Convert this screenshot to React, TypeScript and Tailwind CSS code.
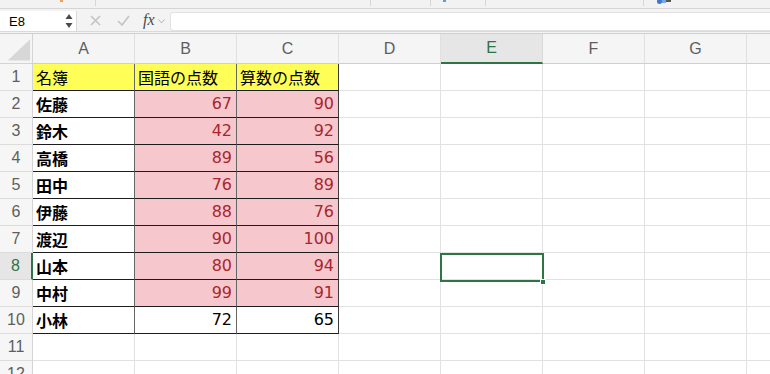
import React from "react";

const cols = ["A", "B", "C", "D", "E", "F", "G", "H"];
const data: [string, number, number][] = [
  ["佐藤", 67, 90],
  ["鈴木", 42, 92],
  ["高橋", 89, 56],
  ["田中", 76, 89],
  ["伊藤", 88, 76],
  ["渡辺", 90, 100],
  ["山本", 80, 94],
  ["中村", 99, 91],
  ["小林", 72, 65],
];

const hdrFont = { fontFamily: '"Liberation Sans", Arial, sans-serif' };
const jpFont = { fontFamily: '"Noto Sans CJK JP", sans-serif' };
const numFont = { fontFamily: '"DejaVu Sans", sans-serif' };

function Cell({ r, c }: { r: number; c: number }) {
  const inTable = r <= 10 && c <= 2;
  let cls = "w-[102px] shrink-0 h-full flex items-center border-b border-r overflow-hidden whitespace-nowrap text-[16px] ";
  if (inTable) {
    cls += "border-b-[#1c1c1c] ";
    cls += c === 2 ? "border-r-[#3a3a3a] " : "border-r-[#666666] ";
  } else {
    cls += "border-b-[#e2e2e2] border-r-[#e2e2e2] ";
  }
  let bg = "bg-white ";
  if (r === 1 && c <= 2) bg = "bg-[#fffe57] ";
  else if (r >= 2 && r <= 9 && (c === 1 || c === 2)) bg = "bg-[#f6c8cd] ";
  cls += bg;

  let content: React.ReactNode = null;
  if (r === 1 && c <= 2) {
    const t = ["名簿", "国語の点数", "算数の点数"][c];
    content = (
      <span className="pl-[3px] text-black" style={jpFont}>
        {t}
      </span>
    );
  } else if (r >= 2 && r <= 10 && c <= 2) {
    const row = data[r - 2];
    if (c === 0) {
      content = (
        <span className="pl-[3px] text-black font-bold" style={jpFont}>
          {row[0]}
        </span>
      );
    } else {
      cls += "justify-end ";
      const red = r <= 9;
      content = (
        <span
          className={red ? "pr-[4px] text-[#a8262c]" : "pr-[4px] text-black"}
          style={numFont}
        >
          {row[c]}
        </span>
      );
    }
  }
  return <div className={cls}>{content}</div>;
}

export default function App() {
  const rows = Array.from({ length: 12 }, (_, i) => i + 1);
  return (
    <div className="w-[770px] h-[374px] overflow-hidden bg-white flex flex-col">
      {/* toolbar remnant */}
      <div className="h-[9px] shrink-0 bg-[#f2f2f2] border-b border-[#d5d5d5] flex items-start">
        <div className="ml-[60px] w-[3px] h-[2px] bg-[#f0a25c]" />
        <div className="ml-[32px] w-[1px] h-[6px] bg-[#d6d6d6]" />
        <div className="ml-[274px] w-[1px] h-[6px] bg-[#d6d6d6]" />
        <div className="ml-[59px] w-[1px] h-[6px] bg-[#d6d6d6]" />
        <div className="ml-[12px] w-[3px] h-[2px] bg-[#5b9be2]" />
        <div className="ml-[39px] w-[1px] h-[6px] bg-[#d6d6d6]" />
        <div className="ml-[157px] w-[1px] h-[6px] bg-[#d6d6d6]" />
        <div className="ml-[13px] w-[14px] h-[5px] flex">
          <div className="w-[5px] h-[4px] bg-[#3f79d0] rounded-b-sm" />
          <div className="w-[4px] h-[3px] bg-[#7aa5e6]" />
          <div className="w-[5px] h-[2px] bg-[#555]" />
        </div>
      </div>

      {/* formula bar */}
      <div className="h-[25px] shrink-0 bg-[#f3f3f3] flex flex-col">
        <div className="h-[22px] flex items-stretch">
          <div className="w-[77px] shrink-0 mt-[2px] bg-white flex items-center border-r border-[#d9d9d9]">
            <span className="ml-[9px] text-[13px] text-black leading-none" style={hdrFont}>
              E8
            </span>
            <svg className="ml-auto mr-[3px]" width="8" height="16" viewBox="0 0 8 16">
              <path d="M4 1 L7.5 6 L0.5 6 Z" fill="#4a4a4a" />
              <path d="M4 15 L7.5 10 L0.5 10 Z" fill="#4a4a4a" />
            </svg>
          </div>
          <div className="flex items-center">
            <svg className="ml-[13px]" width="11" height="11" viewBox="0 0 11 11">
              <path d="M1 1 L10 10 M10 1 L1 10" stroke="#c4c4c4" strokeWidth="1.6" />
            </svg>
            <svg className="ml-[16px]" width="13" height="11" viewBox="0 0 13 11">
              <path d="M1 6 L5 10 L12 1" stroke="#c4c4c4" strokeWidth="1.6" fill="none" />
            </svg>
            <span
              className="ml-[13px] text-[16px] italic text-[#4a4a4a] leading-none"
              style={{ fontFamily: '"Liberation Serif", serif' }}
            >
              fx
            </span>
            <svg className="ml-[3px] mt-[3px]" width="7" height="5" viewBox="0 0 7 5">
              <path d="M0.5 0.5 L3.5 4 L6.5 0.5" stroke="#b5b5b5" strokeWidth="1" fill="none" />
            </svg>
          </div>
          <div className="flex-1 ml-[5px] mt-[3px] bg-white border border-[#e2e2e2] border-r-0 rounded-l-[3px]" />
        </div>
        <div className="h-[1px] bg-[#dadada]" />
        <div className="h-[1px] bg-[#f4f4f4]" />
        <div className="h-[1px] bg-[#cfcfcf]" />
      </div>

      {/* grid */}
      <div className="relative flex-1 overflow-hidden">
        {/* column header */}
        <div className="flex h-[30px]">
          <div className="w-[33px] shrink-0 h-full bg-[#f5f5f5] border-r border-b border-[#d4d4d4] flex items-end justify-end">
            <svg width="33" height="29" viewBox="0 0 33 29">
              <path d="M31 5 L31 27 L8 27 Z" fill="#d7d7d7" />
            </svg>
          </div>
          {cols.map((c) =>
            c === "E" ? (
              <div
                key={c}
                className="w-[102px] shrink-0 h-full bg-[#e6e6e6] border-r border-r-[#d9d9d9] border-b-2 border-b-[#2f7446] flex items-center justify-center text-[16px] text-[#2f7446]"
                style={hdrFont}
              >
                {c}
              </div>
            ) : (
              <div
                key={c}
                className="w-[102px] shrink-0 h-full bg-[#f5f5f5] border-r border-r-[#e0e0e0] border-b border-b-[#cfcfcf] flex items-center justify-center text-[16px] text-[#5e5e5e]"
                style={hdrFont}
              >
                {c === "H" ? "" : c}
              </div>
            )
          )}
        </div>

        {rows.map((r) => (
          <div key={r} className="flex h-[27px]">
            {r === 8 ? (
              <div
                className="w-[33px] shrink-0 h-full bg-[#e6e6e6] border-r-2 border-r-[#2f7446] border-b border-b-[#dcdcdc] flex items-center justify-center text-[16px] text-[#2f7446]"
                style={hdrFont}
              >
                {r}
              </div>
            ) : (
              <div
                className="w-[33px] shrink-0 h-full bg-[#f6f6f6] border-r border-r-[#d4d4d4] border-b border-b-[#dcdcdc] flex items-center justify-center text-[16px] text-[#5e5e5e]"
                style={hdrFont}
              >
                {r}
              </div>
            )}
            {cols.map((_, ci) => (
              <Cell key={ci} r={r} c={ci} />
            ))}
          </div>
        ))}

        {/* selection E8 */}
        <div className="absolute left-[440px] top-[219px] w-[104px] h-[29px] border-2 border-[#2f7446] pointer-events-none" />
        <div className="absolute left-[540px] top-[245px] w-[6px] h-[6px] bg-[#2f7446] border border-white" />
      </div>
    </div>
  );
}
